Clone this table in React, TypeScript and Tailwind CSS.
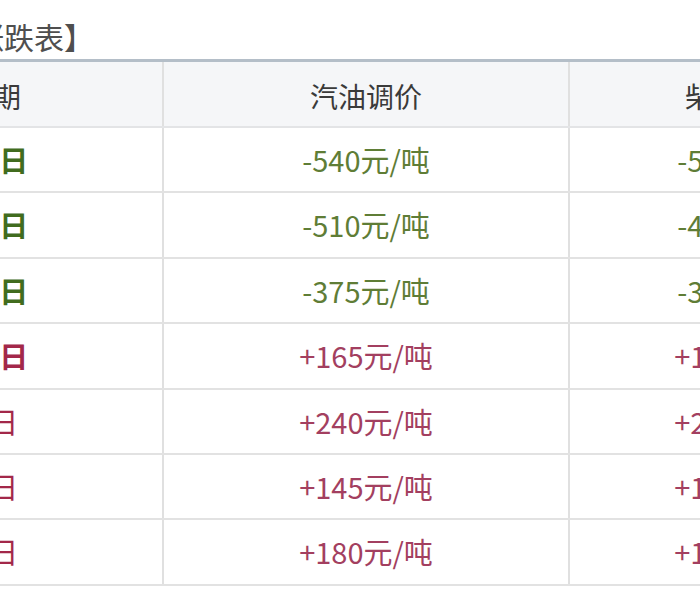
import React from 'react';

type Row = { date: string; gas: string; diesel: string; up: boolean; bold: boolean };

const rows: Row[] = [
  { date: '11月16日', gas: '-540元/吨', diesel: '-515元/吨', up: false, bold: true },
  { date: '11月30日', gas: '-510元/吨', diesel: '-490元/吨', up: false, bold: true },
  { date: '12月14日', gas: '-375元/吨', diesel: '-360元/吨', up: false, bold: true },
  { date: '12月28日', gas: '+165元/吨', diesel: '+160元/吨', up: true, bold: true },
  { date: '1月14日', gas: '+240元/吨', diesel: '+230元/吨', up: true, bold: false },
  { date: '1月28日', gas: '+145元/吨', diesel: '+140元/吨', up: true, bold: false },
  { date: '2月14日', gas: '+180元/吨', diesel: '+175元/吨', up: true, bold: false },
];

const font = { fontFamily: '"Noto Sans CJK SC", "Noto Sans", sans-serif' };

export default function App() {
  return (
    <div className="w-[700px] h-[600px] overflow-hidden bg-white" style={font}>
      {/* the screenshot is a crop of a wider table, so the sheet starts off-screen */}
      <div className="-ml-[232px] w-[1150px]">
        <div className="h-[59px] pt-[19px] pl-[26px] text-[30px] leading-[34px] text-[#4f4f4f]">
          【成品油价格涨跌表】
        </div>

        <div className="border-t-[3px] border-[#b4bec8]">
          <div className="grid grid-cols-[396px_406px_342px] bg-[#f5f6f8] border-b-2 border-[#e3e4e6] text-[28px] text-[#3a3a3a]">
            <div className="h-[64px] pt-[3px] flex items-center justify-center border-r-2 border-[#e0e0e0]">调价日期</div>
            <div className="h-[64px] pt-[3px] flex items-center justify-center border-r-2 border-[#e0e0e0]">汽油调价</div>
            <div className="h-[64px] pt-[3px] flex items-center justify-center">柴油调价</div>
          </div>

          {rows.map((r) => {
            const valueColor = r.up ? 'text-[#a33f60]' : 'text-[#5f7d36]';
            const dateColor = r.up ? 'text-[#a3284a]' : 'text-[#416c1e]';
            return (
              <div
                key={r.date}
                className="grid grid-cols-[396px_406px_342px] border-b-2 border-[#e2e2e2]"
              >
                <div
                  className={`h-[63.4px] flex items-center justify-center border-r-2 border-[#e0e0e0] text-[29px] ${dateColor} ${
                    r.bold ? 'font-bold' : 'font-normal'
                  }`}
                >
                  {r.date}
                </div>
                <div
                  className={`h-[63.4px] flex items-center justify-center border-r-2 border-[#e0e0e0] text-[29px] ${valueColor}`}
                >
                  {r.gas}
                </div>
                <div className={`h-[63.4px] flex items-center justify-center text-[29px] ${valueColor}`}>{r.diesel}</div>
              </div>
            );
          })}
        </div>
      </div>
    </div>
  );
}
